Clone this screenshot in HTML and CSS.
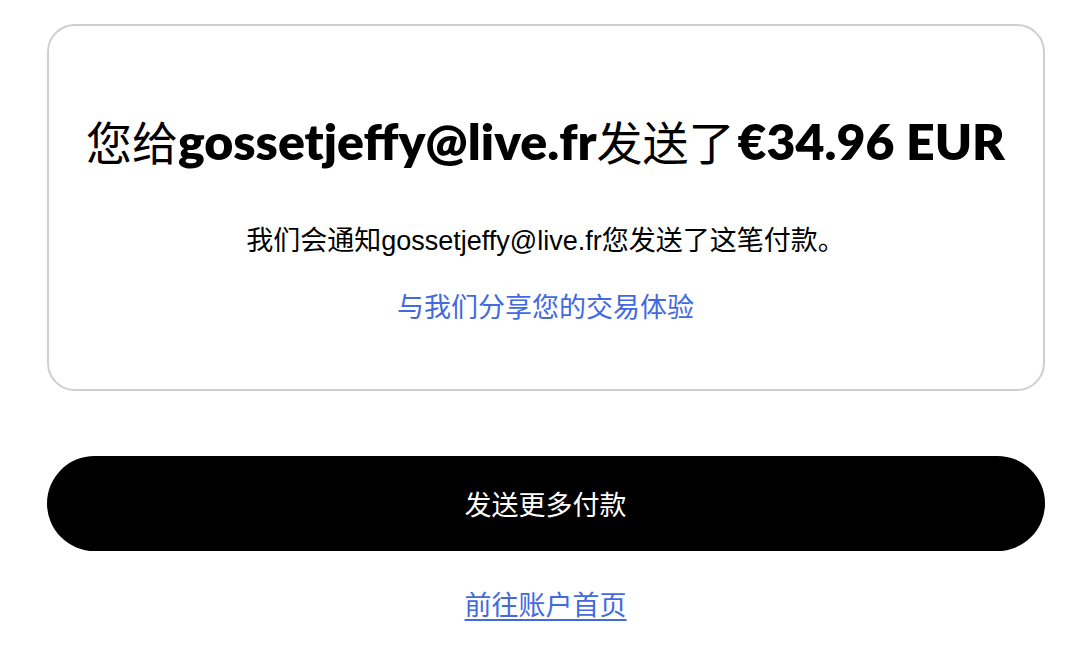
FILE: index.html
```html
<!DOCTYPE html>
<html lang="zh-CN">
<head>
    <meta charset="UTF-8">
    <meta name="viewport" content="width=device-width, initial-scale=1.0">
    <title>付款已发送</title>
    <link rel="stylesheet" href="styles.css">
</head>
<body>
    <div class="page">
        <div class="card">
            <h1 class="title">您给<b>gossetjeffy@live.fr</b>发送了<b class="amount">€34.96 EUR</b></h1>
            <p class="note">我们会通知gossetjeffy@live.fr您发送了这笔付款。</p>
            <a class="feedback" href="#">与我们分享您的交易体验</a>
        </div>
        <button class="send-more">发送更多付款</button>
        <a class="home-link" href="#">前往账户首页</a>
    </div>
</body>
</html>
```

FILE: styles.css
```css
body {
    margin: 0;
    background: #fff;
    color: #000;
    font-family: "Liberation Sans", "Noto Sans CJK SC", sans-serif;
}
.page {
    width: 998px;
    margin: 0 auto;
    padding-top: 24px;
    display: flex;
    flex-direction: column;
    align-items: center;
}
.card {
    box-sizing: border-box;
    width: 100%;
    height: 367px;
    border: 2px solid #cfcfcf;
    border-radius: 28px;
    display: flex;
    flex-direction: column;
    align-items: center;
    padding-top: 86px;
}
.title {
    margin: 0;
    font-size: 46px;
    line-height: 56px;
    font-weight: 400;
    font-family: "Noto Sans CJK SC", sans-serif;
    white-space: nowrap;
}
.title b {
    font-family: "Lato", "Noto Sans CJK SC", sans-serif;
    font-size: 50px;
    font-weight: 800;
}
.amount {
    margin-left: 3px;
}
.note {
    margin: 56px 0 0;
    font-size: 27px;
    line-height: 32px;
}
.feedback {
    margin-top: 33px;
    font-size: 27px;
    line-height: 32px;
    color: #4369e0;
    text-decoration: none;
    font-family: "Noto Sans CJK SC", sans-serif;
}
.send-more {
    margin-top: 65px;
    width: 100%;
    height: 95px;
    border: none;
    border-radius: 48px;
    background: #000;
    color: #fff;
    font-family: "Noto Sans CJK SC", sans-serif;
    font-size: 27px;
    cursor: pointer;
}
.home-link {
    margin-top: 35px;
    font-size: 27px;
    line-height: 36px;
    color: #4369e0;
    font-family: "Noto Sans CJK SC", sans-serif;
    text-underline-offset: 4px;
}
```
